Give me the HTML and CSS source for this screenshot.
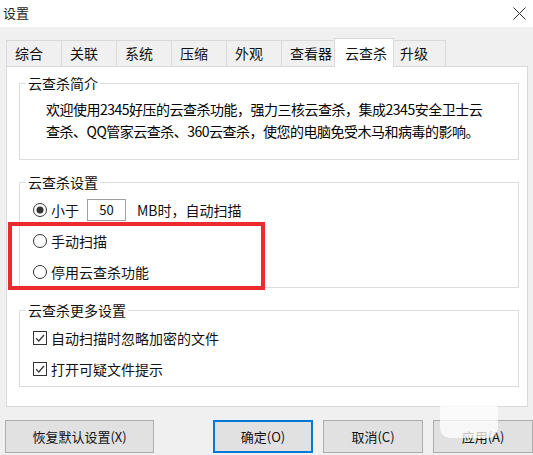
FILE: index.html
```html
<!DOCTYPE html>
<html>
<head>
    <meta charset="utf-8">
    <link rel="stylesheet" href="styles.css">
</head>
<body>
    <div class="titlebar">
        <span class="title">设置</span>
        <svg class="close" width="13" height="13" viewBox="0 0 13 13">
            <path d="M0.5 0.5L12.5 12.5M12.5 0.5L0.5 12.5" stroke="#333" stroke-width="1" fill="none"/>
        </svg>
    </div>

    <div class="dialog">
        <div class="tabs">
            <div class="tab">综合</div>
            <div class="tab">关联</div>
            <div class="tab">系统</div>
            <div class="tab">压缩</div>
            <div class="tab">外观</div>
            <div class="tab">查看器</div>
            <div class="tab active">云查杀</div>
            <div class="tab last">升级</div>
        </div>

        <div class="panel">
            <fieldset class="group">
                <legend>云查杀简介</legend>
                <p class="intro">欢迎使用2345好压的云查杀功能，强力三核云查杀，集成2345安全卫士云<br>查杀、QQ管家云查杀、360云查杀，使您的电脑免受木马和病毒的影响。</p>
            </fieldset>

            <fieldset class="group">
                <legend>云查杀设置</legend>
                <div class="row">
                    <svg class="radio" width="14" height="14" viewBox="0 0 14 14">
                        <circle cx="7" cy="7" r="6.5" fill="#fff" stroke="#333"/>
                        <circle cx="7" cy="7" r="3.5" fill="#333"/>
                    </svg>
                    <span>小于</span>
                    <span class="field">50</span>
                    <span class="after-field">MB时，自动扫描</span>
                </div>
                <div class="marked">
                    <div class="row">
                        <svg class="radio" width="14" height="14" viewBox="0 0 14 14">
                            <circle cx="7" cy="7" r="6.5" fill="#fff" stroke="#333"/>
                        </svg>
                        <span>手动扫描</span>
                    </div>
                    <div class="row">
                        <svg class="radio" width="14" height="14" viewBox="0 0 14 14">
                            <circle cx="7" cy="7" r="6.5" fill="#fff" stroke="#333"/>
                        </svg>
                        <span>停用云查杀功能</span>
                    </div>
                </div>
            </fieldset>

            <fieldset class="group more">
                <legend>云查杀更多设置</legend>
                <div class="row">
                    <svg class="check" width="14" height="14" viewBox="0 0 14 14">
                        <rect x="0.5" y="0.5" width="13" height="13" fill="#fff" stroke="#333"/>
                        <path d="M3 7.2L5.8 10L11 4" fill="none" stroke="#333" stroke-width="1.2"/>
                    </svg>
                    <span>自动扫描时忽略加密的文件</span>
                </div>
                <div class="row">
                    <svg class="check" width="14" height="14" viewBox="0 0 14 14">
                        <rect x="0.5" y="0.5" width="13" height="13" fill="#fff" stroke="#333"/>
                        <path d="M3 7.2L5.8 10L11 4" fill="none" stroke="#333" stroke-width="1.2"/>
                    </svg>
                    <span>打开可疑文件提示</span>
                </div>
            </fieldset>
        </div>

        <div class="buttons">
            <button class="btn wide">恢复默认设置(X)</button>
            <button class="btn default">确定(O)</button>
            <button class="btn">取消(C)</button>
            <button class="btn">应用(A)</button>
        </div>
    </div>

    <div class="watermark"></div>
</body>
</html>
```

FILE: styles.css
```css
* {
    box-sizing: border-box;
}
body {
    margin: 0;
    width: 533px;
    height: 455px;
    overflow: hidden;
    position: relative;
    background: #f0f0f0;
    font-family: "Noto Sans CJK SC", "Liberation Sans", sans-serif;
    font-size: 14px;
    color: #111;
}
.titlebar {
    height: 27px;
    background: #fff;
    display: flex;
    align-items: center;
    justify-content: space-between;
    padding: 0 7px 1px 3px;
}
.title {
    font-size: 13px;
    line-height: 16px;
    color: #222;
}
.dialog {
    padding-left: 6px;
}
.tabs {
    display: flex;
    align-items: flex-end;
    height: 26px;
    margin-top: 13px;
}
.tab {
    width: 56px;
    height: 26px;
    margin-right: -1px;
    padding-left: 8px;
    border: 1px solid #d9d9d9;
    border-bottom: none;
    background: #f0f0f0;
    line-height: 24px;
    white-space: nowrap;
}
.tab.active {
    position: relative;
    z-index: 1;
    width: 60px;
    height: 29px;
    margin: 0 -3px -1px -2px;
    padding: 2px 0 0 10px;
    background: #fff;
}
.tab.last {
    width: 55px;
}
.panel {
    width: 522px;
    height: 341px;
    border: 1px solid #d9d9d9;
    background: #fff;
    padding: 8px 8px 0 12px;
}
.group {
    margin: 0;
    padding: 0;
    border: 1px solid #dcdcdc;
}
.group + .group {
    margin-top: 14px;
}
.group legend {
    margin-left: 6px;
    padding: 0 2px;
    line-height: 16px;
}
.intro {
    margin: 0;
    padding: 7px 0 17px 26px;
    line-height: 22px;
    letter-spacing: -0.5px;
    color: #000;
}
.group .row:first-of-type {
    margin-top: 4px;
}
.row {
    display: flex;
    align-items: center;
    gap: 4px;
    height: 31px;
    padding-left: 13px;
    line-height: 16px;
}
.marked .row:first-child {
    margin-top: 0;
}
.more {
    padding-bottom: 2px;
}
.field {
    width: 39px;
    height: 22px;
    margin-left: 4px;
    border: 1px solid #a0a0a0;
    font-size: 13px;
    line-height: 20px;
    text-align: center;
}
.after-field {
    margin-left: 7px;
}
.marked {
    position: relative;
}
.marked::after {
    content: "";
    position: absolute;
    top: -3px;
    bottom: -3px;
    left: -12px;
    width: 249px;
    border: 4px solid #ec2a2f;
}
.buttons {
    display: flex;
    gap: 10px;
    margin: 13px 0 0 -1px;
}
.btn {
    width: 100px;
    height: 33px;
    padding: 0;
    border: 1px solid #adadad;
    background: #e1e1e1;
    font-family: inherit;
    font-size: 13px;
    color: #111;
}
.btn.wide {
    width: 149px;
    margin-right: 49px;
}
.btn.default {
    border: 2px solid #0078d7;
}
.watermark {
    position: absolute;
    left: 440px;
    top: 398px;
    width: 58px;
    height: 40px;
    background: rgba(255, 255, 255, 0.75);
    border-radius: 10px;
}
```
